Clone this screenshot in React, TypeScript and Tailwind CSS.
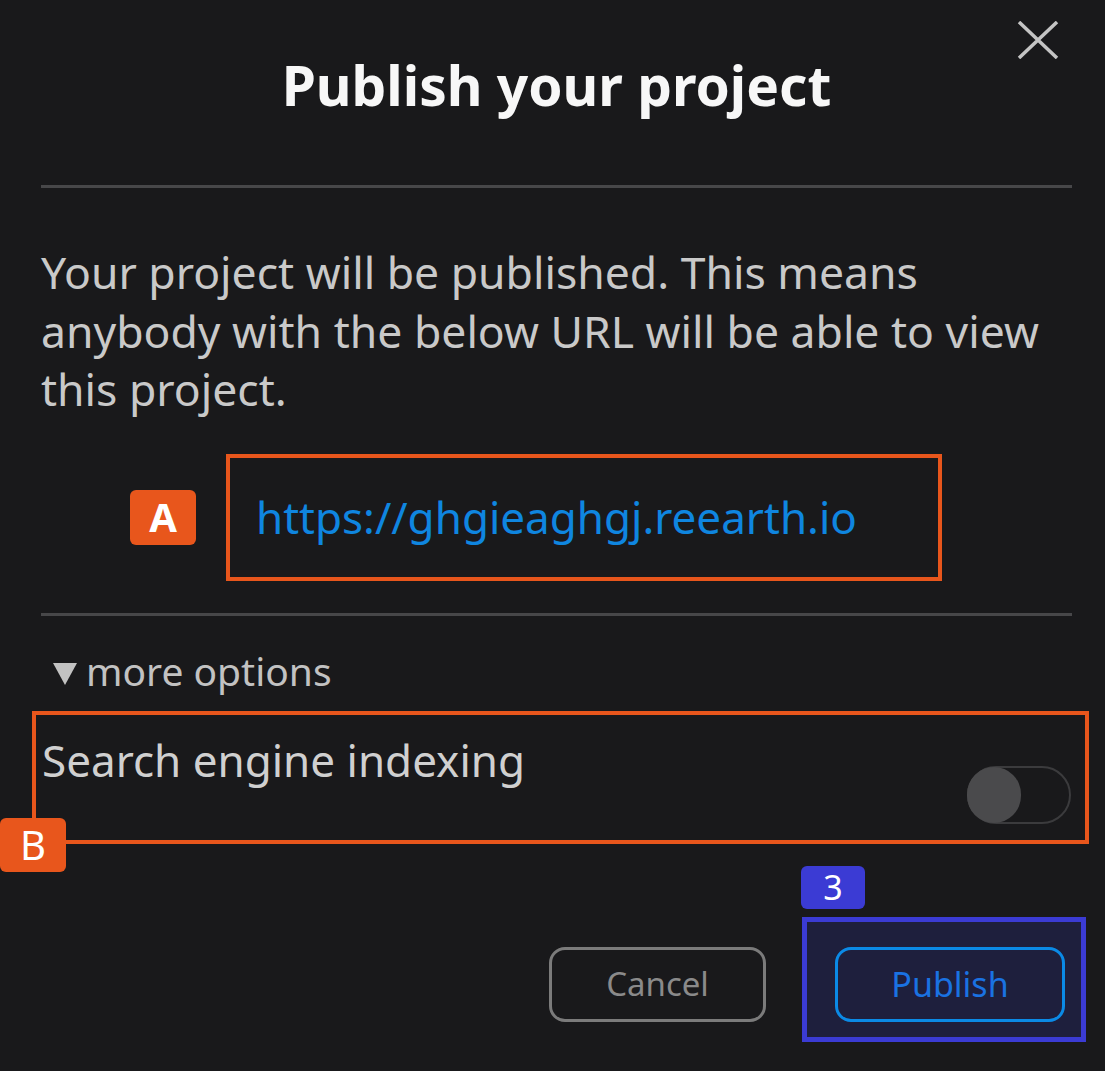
import { FC } from 'react';

// Диалог публикации проекта с аннотациями
const CloseIcon: FC = () => (
    <svg width="42" height="38" viewBox="0 0 42 38" fill="none">
        <path d="M2 1 L40 37 M40 1 L2 37" stroke="#c4c4c4" strokeWidth="3.5" />
    </svg>
);

const Badge: FC<{ label: string; className: string }> = ({ label, className }) => (
    <div className={`flex items-center justify-center rounded-[6px] text-white ${className}`}>
        {label}
    </div>
);

const App: FC = () => {
    return (
        <div className="relative w-[1105px] h-[1071px] overflow-hidden bg-[#19191b] font-['Noto_Sans','Open_Sans',sans-serif]">
            {/* Кнопка закрытия */}
            <div className="absolute left-[1017px] top-[21px]">
                <CloseIcon />
            </div>

            <div className="flex flex-col pl-[41px] pr-[33px]">
                <header className="h-[185px] pt-[50px] text-center">
                    <h1 className="text-[55px] leading-[70px] font-bold text-[#f7f7f7]">Publish your project</h1>
                </header>
                <div className="h-[3px] bg-[#474749]" />

                <p className="mt-[55px] text-[44.5px] leading-[58.5px] text-[#c9c9c9]">
                    Your project will be published. This means anybody with the below URL will be able to view this project.
                </p>

                {/* Ссылка на опубликованный проект */}
                <div className="mt-[35px] ml-[89px] flex items-center gap-[30px]">
                    <Badge label="A" className="w-[66px] h-[55px] bg-[#e8561c] text-[40px] font-bold" />
                    <div className="w-[716px] h-[127px] border-4 border-[#e8561c] flex items-center pl-[26px]">
                        <span className="text-[44px] text-[#0f86e0]">https://ghgieaghgj.reearth.io</span>
                    </div>
                </div>

                <div className="mt-[32px] h-[3px] bg-[#474749]" />

                <div className="mt-[30px] flex items-center h-[50px] text-[39px] leading-[50px] text-[#c2c2c2]">
                    <svg width="24" height="22" viewBox="0 0 24 22" className="ml-[12px] mr-[9px] mt-[6px]">
                        <polygon points="0,0 24,0 12,22" fill="#c2c2c2" />
                    </svg>
                    more options
                </div>

                {/* Индексация поисковыми системами */}
                <div className="mt-[15px] ml-[-9px] mr-[-17px] h-[133px] border-4 border-[#e8561c] flex justify-between pl-[6px] pr-[14px] pb-[16px]">
                    <span className="pt-[20px] text-[44px] leading-[50px] text-[#d0d0d0]">Search engine indexing</span>
                    <div className="self-end w-[104px] h-[58px] rounded-full border-2 border-[#3b3b3d] flex items-center">
                        <div className="ml-[-2px] w-[54px] h-[56px] rounded-full bg-[#4a4a4c]" />
                    </div>
                </div>

                {/* Кнопки действий */}
                <div className="mt-[73px] mr-[-14px] flex justify-end items-start gap-[36px]">
                    <button className="mt-[30px] w-[217px] h-[75px] rounded-[16px] border-[3px] border-[#7b7b7b] text-[33px] text-[#8a8a8a]">
                        Cancel
                    </button>
                    <div className="w-[284px] h-[125px] border-[5px] border-[#3b3bd4] bg-[#1e1f3d] pt-[25px] pl-[28px]">
                        <button className="w-[230px] h-[75px] rounded-[16px] border-[3px] border-[#0b8ae6] text-[34px] text-[#1a72e2]">
                            Publish
                        </button>
                    </div>
                </div>
            </div>

            {/* Аннотации */}
            <Badge label="B" className="absolute left-0 top-[818px] w-[66px] h-[54px] bg-[#e8561c] text-[40px]" />
            <Badge label="3" className="absolute left-[801px] top-[866px] w-[64px] h-[43px] bg-[#3b3bd4] text-[34px]" />
        </div>
    );
};

export default App;
